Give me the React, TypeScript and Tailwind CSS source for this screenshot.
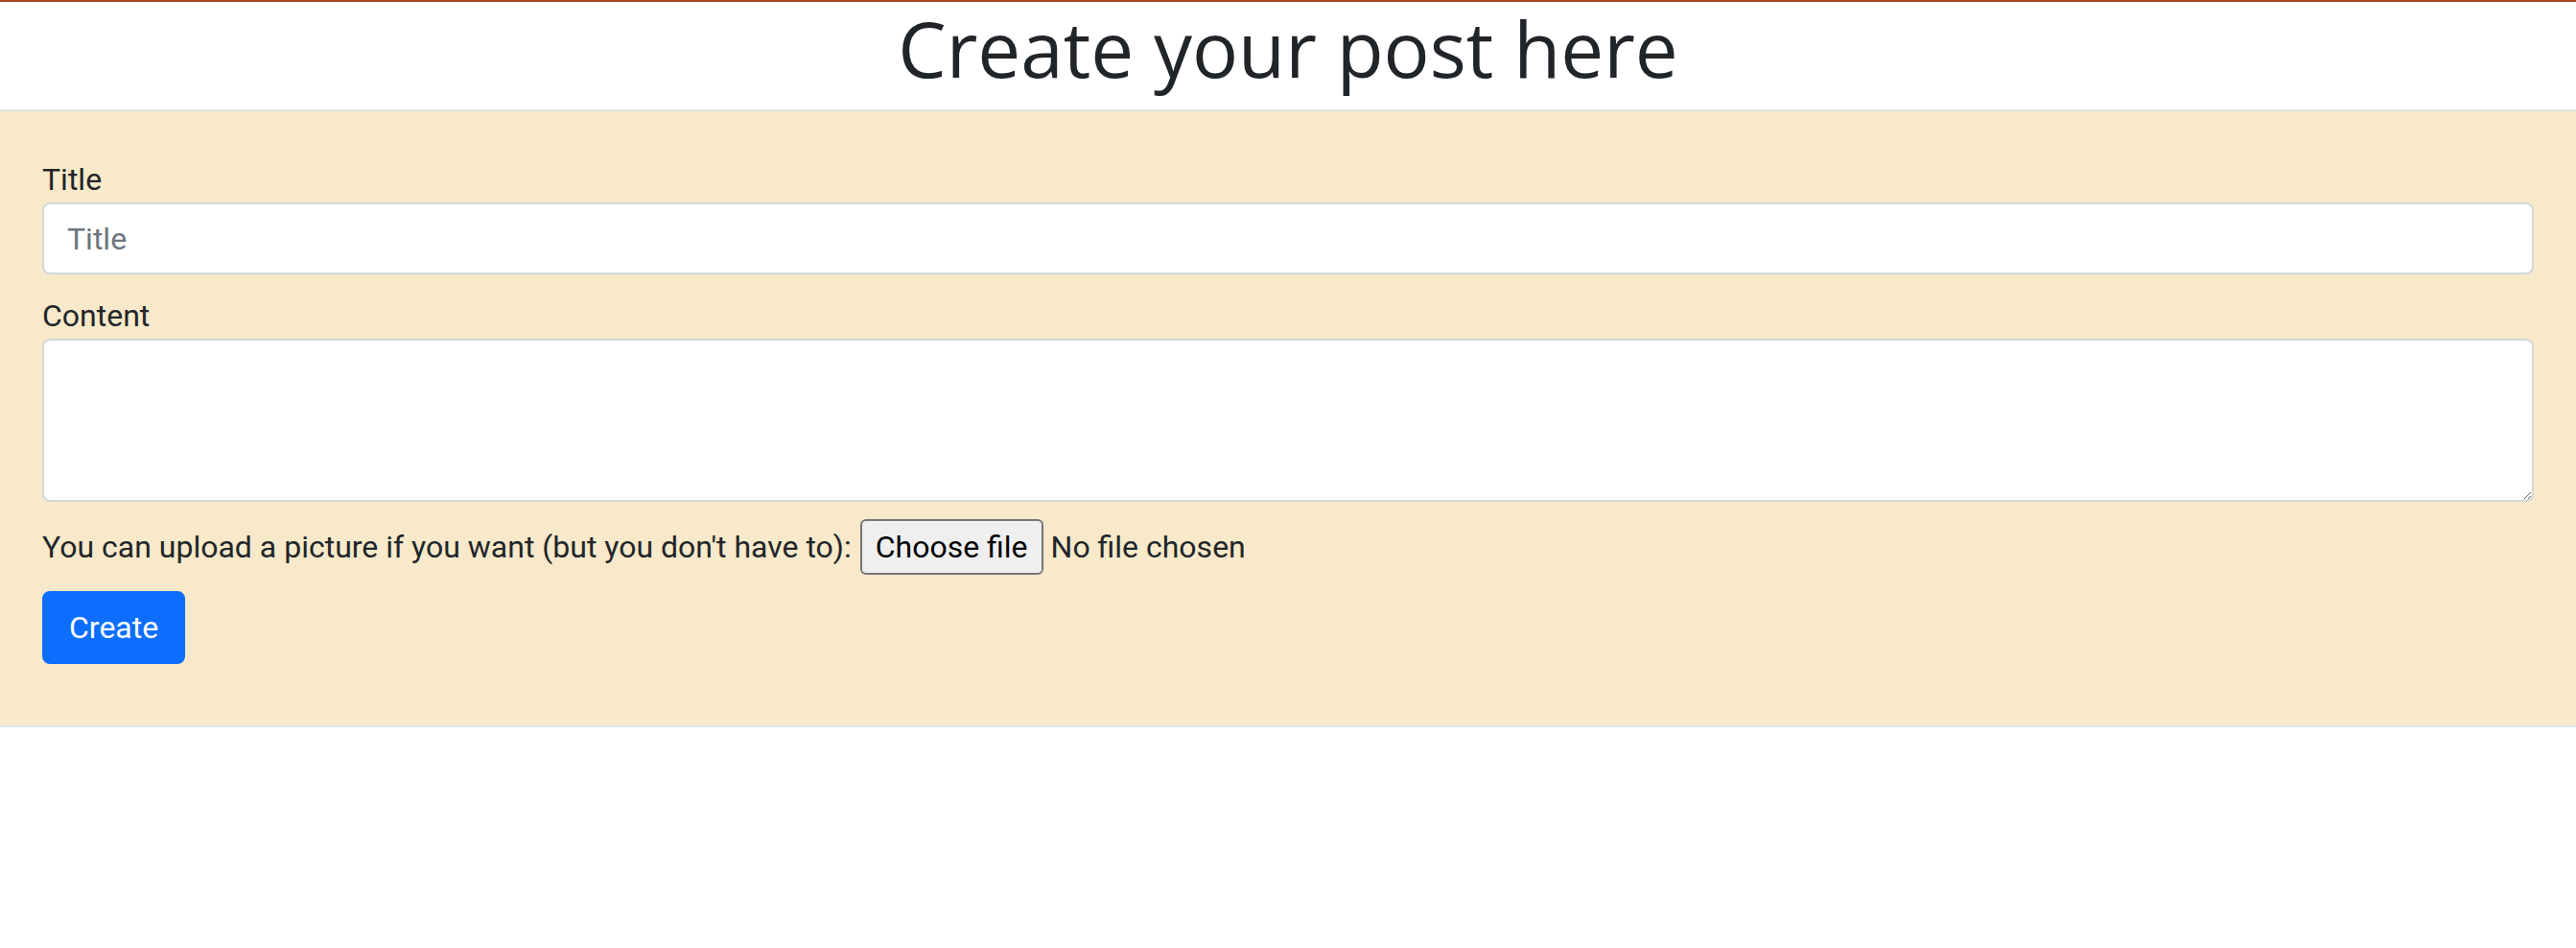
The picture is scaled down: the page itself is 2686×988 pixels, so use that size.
export default function App() {
  return (
    <div className="min-h-[988px] bg-white text-[#212529] font-['Roboto',_'Liberation_Sans',_sans-serif]">
      <header className="border-t-2 border-[#a8461f]">
        <h1 className="pb-[16px] text-center text-[80px] leading-[96px] font-medium font-['Open_Sans',_'Noto_Sans',_sans-serif]">
          Create your post here
        </h1>
      </header>

      <form
        className="border-y-2 border-[#dee2e6] bg-[#f7e9c9] px-[44px] pt-[47px] pb-[64px] text-[32px] leading-[48px]"
        onSubmit={(e) => e.preventDefault()}
      >
        <label htmlFor="title" className="block">
          Title
        </label>
        <input
          id="title"
          type="text"
          placeholder="Title"
          className="block h-[75px] w-full rounded-[8px] border-2 border-[#d3d6db] bg-white px-[24px] text-[32px] placeholder:text-[#6c757d] outline-none"
        />

        <label htmlFor="content" className="mt-[19px] block">
          Content
        </label>
        <textarea
          id="content"
          className="block h-[170px] w-full rounded-[8px] border-2 border-[#d3d6db] bg-white px-[24px] py-[12px] text-[32px] outline-none"
        />

        <div className="mt-[18px] flex items-center">
          <span>You can upload a picture if you want (but you don't have to):</span>
          <button
            type="button"
            className="ml-[9px] h-[58px] rounded-[6px] border-2 border-[#767676] bg-[#efefef] px-[14px] text-[32px] leading-none text-black"
          >
            Choose file
          </button>
          <span className="ml-[8px]">No file chosen</span>
        </div>

        <button
          type="submit"
          className="mt-[17px] block h-[76px] rounded-[8px] border-2 border-[#0d6efd] bg-[#0d6efd] px-[26px] text-[32px] leading-[48px] text-white"
        >
          Create
        </button>
      </form>
    </div>
  );
}
